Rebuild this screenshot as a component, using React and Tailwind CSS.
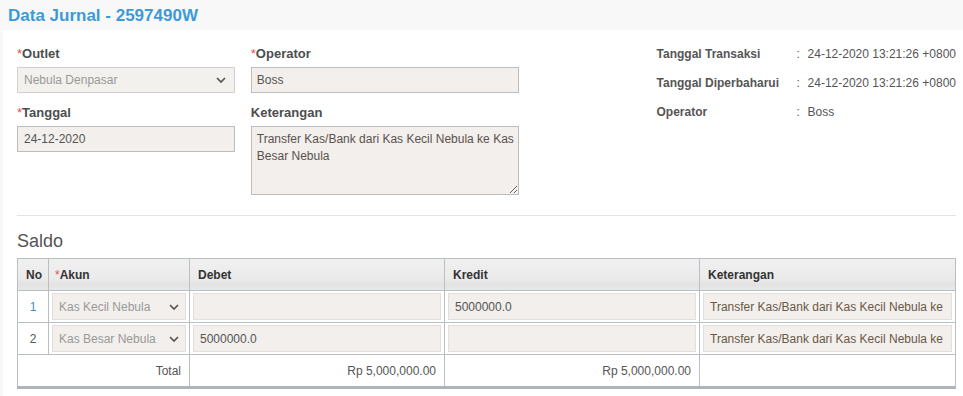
import React from 'react';

const Chevron = ({ className }) => (
	<svg width="10" height="6" viewBox="0 0 10 6" className={className}>
		<path d="M1 1 L5 5 L9 1" fill="none" stroke="#555" strokeWidth="1.7" />
	</svg>
);

const Label = ({ req, children }) => (
	<div className="text-[13px] leading-[18px] font-bold text-[#4d4d4d] mb-[4px]">
		{req && <span className="text-[#e0534f] font-normal">*</span>}
		{children}
	</div>
);

const info = [
	['Tanggal Transaksi', '24-12-2020 13:21:26 +0800'],
	['Tanggal Diperbaharui', '24-12-2020 13:21:26 +0800'],
	['Operator', 'Boss'],
];

const rows = [
	{ no: 1, akun: 'Kas Kecil Nebula', debet: '', kredit: '5000000.0' },
	{ no: 2, akun: 'Kas Besar Nebula', debet: '5000000.0', kredit: '' },
];

const cellInput =
	'h-[27px] bg-[#f2efec] border border-[#e3dfdb] px-[6px] flex items-center text-[12px] whitespace-nowrap overflow-hidden';

export default function App() {
	return (
		<div className="min-h-screen bg-[#f8f8f8] font-['Liberation_Sans',Arial,sans-serif]">
			<div className="pl-[8px] pt-[6px] mb-[4px] text-[17px] leading-[20px] font-bold text-[#3d9ad6]">
				Data Jurnal - 2597490W
			</div>
			<div className="ml-[3px] bg-white pt-[15px] pl-[14px] pr-[7px] pb-[9px]">
				<div className="flex">
					<div className="w-[218px]">
						<Label req>Outlet</Label>
						<div className="h-[26px] mb-[11px] bg-[#f3f1ee] border border-[#d3d0cd] px-[6px] flex items-center justify-between text-[12px] text-[#999]">
							<span>Nebula Denpasar</span>
							<Chevron className="mr-[2px]" />
						</div>
						<Label req>Tanggal</Label>
						<div className="h-[26px] bg-[#f2efec] border border-[#bdbdbd] px-[6px] flex items-center text-[12px] text-[#555]">
							24-12-2020
						</div>
					</div>
					<div className="w-[268px] ml-[16px]">
						<Label req>Operator</Label>
						<div className="h-[26px] mb-[11px] bg-[#f2efec] border border-[#bdbdbd] px-[5px] flex items-center text-[12px] text-[#555]">
							Boss
						</div>
						<Label>Keterangan</Label>
						<textarea
							readOnly
							className="block w-full h-[69px] bg-[#f2efec] border border-[#bdbdbd] pl-[5px] pr-0 pt-[4px] text-[12px] leading-[17px] text-[#5a524c] outline-none"
							value="Transfer Kas/Bank dari Kas Kecil Nebula ke Kas Besar Nebula"
						/>
					</div>
					<div className="ml-[138px] pt-[1px]">
						{info.map(([k, v]) => (
							<div key={k} className="flex h-[29px] text-[12px] leading-[16px] text-[#555] whitespace-nowrap">
								<div className="w-[140px] shrink-0 font-bold">{k}</div>
								<div className="w-[11px] shrink-0">:</div>
								<div>{v}</div>
							</div>
						))}
					</div>
				</div>
				<div className="mt-[20px] border-t border-[#e3e3e3]" />
				<div className="mt-[14px] mb-[6px] text-[18px] leading-[22px] text-[#555]">Saldo</div>
				<table className="w-full border-collapse table-fixed text-[12px]">
					<colgroup>
						<col className="w-[31px]" />
						<col className="w-[141px]" />
						<col className="w-[255px]" />
						<col className="w-[255px]" />
						<col />
					</colgroup>
					<thead>
						<tr className="h-[32px] bg-[linear-gradient(#f0f0f0,#ebebeb_60%,#e2e2e2_80%,#eaeaea)] text-[#333] font-bold text-left">
							<th className="border border-[#b9bfc2] px-[8px]">No</th>
							<th className="border border-[#b9bfc2] px-[6px]">
								<span className="text-[#e0534f] font-normal">*</span>Akun
							</th>
							<th className="border border-[#b9bfc2] px-[8px]">Debet</th>
							<th className="border border-[#b9bfc2] px-[8px]">Kredit</th>
							<th className="border border-[#b9bfc2] px-[8px]">Keterangan</th>
						</tr>
					</thead>
					<tbody>
						{rows.map((r) => (
							<tr key={r.no} className="h-[32px]">
								<td className={`border border-[#b9bfc2] text-center ${r.no === 1 ? 'text-[#3d8fc6]' : 'text-[#555]'}`}>
									{r.no}
								</td>
								<td className="border border-[#b9bfc2] px-[3px] py-[2px]">
									<div className={`${cellInput} justify-between text-[#999]`}>
										<span>{r.akun}</span>
										<Chevron className="shrink-0" />
									</div>
								</td>
								<td className="border border-[#b9bfc2] px-[3px] py-[2px]">
									<div className={`${cellInput} text-[#555]`}>{r.debet}</div>
								</td>
								<td className="border border-[#b9bfc2] px-[3px] py-[2px]">
									<div className={`${cellInput} text-[#555]`}>{r.kredit}</div>
								</td>
								<td className="border border-[#b9bfc2] px-[3px] py-[2px]">
									<div className={`${cellInput} text-[#6a5846]`}>
										Transfer Kas/Bank dari Kas Kecil Nebula ke
									</div>
								</td>
							</tr>
						))}
						<tr className="h-[33px] text-[#555] text-right">
							<td colSpan={2} className="border border-b-[3px] border-[#b9bfc2] border-b-[#adb5b8] px-[8px]">
								Total
							</td>
							<td className="border border-b-[3px] border-[#b9bfc2] border-b-[#adb5b8] px-[8px]">
								Rp 5,000,000.00
							</td>
							<td className="border border-b-[3px] border-[#b9bfc2] border-b-[#adb5b8] px-[8px]">
								Rp 5,000,000.00
							</td>
							<td className="border border-b-[3px] border-[#b9bfc2] border-b-[#adb5b8] px-[8px]"></td>
						</tr>
					</tbody>
				</table>
			</div>
		</div>
	);
}
